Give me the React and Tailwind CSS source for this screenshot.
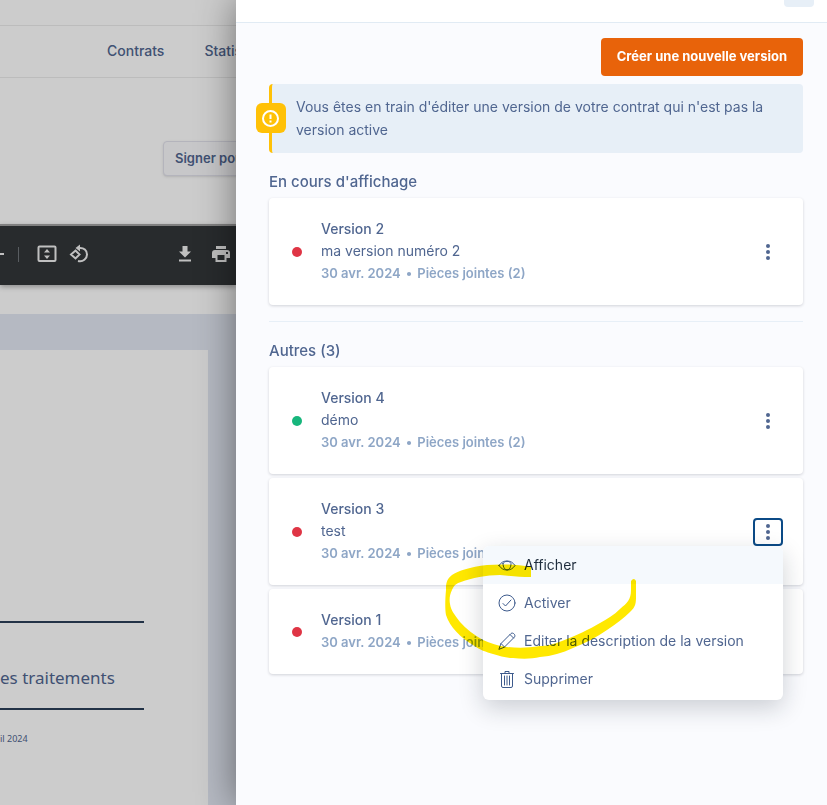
const font = "font-['Inter','Noto_Sans',sans-serif]";

function Kebab({ open, label }) {
  return (
    <button
      type="button"
      aria-label={label}
      aria-expanded={open}
      className={
        open
          ? 'flex h-7 w-[30px] items-center justify-center rounded border-2 border-[#0b4a86] bg-white'
          : 'flex h-7 w-[30px] items-center justify-center rounded'
      }
    >
      <svg width="4" height="16" viewBox="0 0 4 16" fill="#506690" className="shrink-0">
        <circle cx="2" cy="2" r="2" />
        <circle cx="2" cy="8" r="2" />
        <circle cx="2" cy="14" r="2" />
      </svg>
    </button>
  );
}

const stroke = {
  width: 18,
  height: 18,
  viewBox: '0 0 18 18',
  fill: 'none',
  stroke: 'currentColor',
  strokeLinecap: 'round',
  strokeLinejoin: 'round',
  className: 'shrink-0',
};

function EyeIcon() {
  return (
    <svg {...stroke}>
      <path d="M1 9.500C3 6.500 5.500 5 9 5s6 1.500 8 4.500c-2 3-4.500 4.500-8 4.500S3 12.500 1 9.500z" />
      <path d="M5 7.500c0 8.500 8 8.500 8 0C11.500 4.500 6.500 4.500 5 7.500z" />
    </svg>
  );
}

function CheckIcon() {
  return (
    <svg {...stroke}>
      <circle cx="9" cy="9" r="8" />
      <path d="M5 9.500l2.500 2.500L13 6" />
    </svg>
  );
}

function PencilIcon() {
  return (
    <svg {...stroke}>
      <path d="M1 17l2-5.500L13 1.500C15 0 18 3 16.500 5L6.500 15zM12 2.500L15.500 6M3 11.500L6.500 15" />
    </svg>
  );
}

function TrashIcon() {
  return (
    <svg {...stroke}>
      <path d="M2.500 3.500h13M7 3.500v-2h4v2M3.500 3.500V16q0 1.500 1.500 1.500h8q1.500 0 1.500-1.500V3.500M6.500 6v9M9 6v9M11.500 6v9" />
    </svg>
  );
}

const actions = [
  { label: 'Afficher', Icon: EyeIcon, active: true },
  { label: 'Activer', Icon: CheckIcon },
  { label: 'Editer la description de la version', Icon: PencilIcon },
  { label: 'Supprimer', Icon: TrashIcon },
];

function ActionMenu() {
  return (
    <div
      role="menu"
      className="absolute top-full right-0 z-10 w-[300px] overflow-hidden rounded-md bg-white pb-0.5 shadow-[0_8px_24px_rgba(22,28,45,0.2)]"
    >
      {actions.map(({ label, Icon, active }) => (
        <button
          key={label}
          type="button"
          role="menuitem"
          className={
            active
              ? 'flex h-[38px] w-full items-center gap-2 bg-[#f5f9fd] px-[15px] text-left text-[14px] text-[#1f2d3d]'
              : 'flex h-[38px] w-full items-center gap-2 px-[15px] text-left text-[14px] text-[#506690]'
          }
        >
          <span className="flex text-[#3d5a8c]">
            <Icon />
          </span>
          {label}
        </button>
      ))}
    </div>
  );
}

function VersionCard({ title, description, live, attachments = 2, open }) {
  return (
    <article className="flex items-center rounded bg-white py-5 pr-5 pl-[23px] shadow-[0_1px_3px_rgba(22,28,45,0.18)]">
      <span className={live ? 'size-[10px] rounded-full bg-[#17b67c]' : 'size-[10px] rounded-full bg-[#df3545]'} />
      <div className="ml-[19px] min-w-0 flex-1 text-[14px] text-[#506690]">
        <h3 className="leading-[22px] font-medium">{title}</h3>
        {description && <p className="leading-[22px]">{description}</p>}
        <p className="flex gap-[5px] text-[13px] leading-[23px] font-semibold text-[#8ea6c6]">
          <span>30 avr. 2024</span>
          <span>•</span>
          <span>Pièces jointes ({attachments})</span>
        </p>
      </div>
      <div className="relative">
        <Kebab open={open} label={`Actions ${title}`} />
        {open && <ActionMenu />}
      </div>
    </article>
  );
}

function PageBehind() {
  return (
    <div className="relative w-[236px] shrink-0 overflow-hidden bg-white whitespace-nowrap">
      <div className="h-[26px] border-b border-[#ebebeb]" />
      <nav className="flex h-[52px] items-center gap-10 border-b border-[#ebebeb] pb-0.5 pl-[107px] text-[14px] font-medium text-[#506690]">
        <a href="#contrats">Contrats</a>
        <a href="#statistiques">Statistiques</a>
      </nav>
      <div className="flex pt-[63px] pb-12 pl-[163px]">
        <button type="button" className="h-[35px] shrink-0 rounded border border-[#e1e1ec] bg-[#f9f9fc] px-[11px] text-[13px] font-semibold text-[#506690] shadow-sm">
          Signer pour
        </button>
      </div>
      <div className="flex h-[61px] items-center border-t-2 border-[#a0a0a0] bg-[#323639] pb-[3px] text-[#f1f1f1] shadow-[0_2px_5px_rgba(0,0,0,0.3)]">
        <span className="h-[2px] w-1 bg-[#f1f1f1]" />
        <span className="ml-[14px] h-[15px] w-px bg-[#70757a]" />
        <svg width="20" height="18" viewBox="0 0 20 18" className="ml-[18px] shrink-0" fill="currentColor">
          <rect x="1.500" y="1.500" width="17" height="14.500" rx="1" fill="none" stroke="currentColor" strokeWidth="2" />
          <path d="M10 4l3 3.500H7zM10 14l3-3.500H7z" />
        </svg>
        <svg width="20" height="20" viewBox="0 0 20 20" className="ml-3 shrink-0" fill="none" stroke="currentColor" strokeWidth="2">
          <path d="M6.500 6.500l4 4-4 4-4.500-4z" />
          <path d="M10 4c5-.5 8 2.500 8 6.500s-4 8-9 6.500" />
          <path d="M11 .5v7L6.500 4z" fill="currentColor" stroke="none" />
        </svg>
        <svg width="12" height="16" viewBox="0 0 12 16" className="ml-[90px] shrink-0" fill="currentColor">
          <path d="M3.500 0h5v5.500H12l-6 6-6-6h3.500zM0 13.500h12v2H0z" />
        </svg>
        <svg width="18" height="16" viewBox="0 0 18 16" className="ml-[21px] shrink-0" fill="currentColor">
          <path fillRule="evenodd" d="M4 0h10v3H4zM3 4h12q3 0 3 3v5h-3.500v4h-11v-4H0V7q0-3 3-3zM5.500 9v5h7V9zM14 6v2h2V6z" />
        </svg>
      </div>
      <div className="mt-[29px] bg-[#e3e8f3] pt-9 pr-7">
        <div className="h-[455px] bg-white">
          <div className="h-[271px]" />
          <div className="flex h-[89px] w-36 items-center border-y-2 border-[#2b3f58] pt-6 font-['Noto_Sans',sans-serif] text-[17px] text-[#506690]">
            <span className="h-[26px] leading-[26px]">es traitements</span>
          </div>
          <p className="pt-5 font-['Noto_Sans',sans-serif] text-[9px] leading-[18px] text-[#506690]">il 2024</p>
        </div>
      </div>
      <div className="absolute inset-0 bg-black/20" />
    </div>
  );
}

function HighlighterMark() {
  return (
    <svg
      width="191"
      height="96"
      viewBox="445 563 191 96"
      className="pointer-events-none absolute top-[563px] right-[191px] z-20 mix-blend-multiply"
      fill="#ffe800"
    >
      <path d="M531 567C515 564 500 564 487 565C470 567 458 571 452 575C446 580 446 584 446 590C445 600 445 610 446 615C450 627 460 637 473 645C480 650 486 652 493 654C500 656 506 658 513 658C522 659 532 659 540 657C552 656 562 653 573 648C586 643 597 637 607 630C616 624 624 618 630 612C636 607 636 602 636 596V581Q634 577 631 581V590C631 600 627 603 620 609C614 615 607 619 600 623C590 629 575 636 562 641C552 645 546 646 540 646C528 648 518 648 507 647C498 646 490 643 483 640C474 635 466 629 460 622C455 615 451 611 450 604C449 599 450 594 452 590C454 585 457 583 461 582C472 578 486 575 500 575C512 576 520 577 531 577Z" />
    </svg>
  );
}

function VersionsDrawer() {
  return (
    <aside className="relative z-10 flex min-w-0 flex-1 flex-col bg-[#fafbfe] shadow-[0_0_36px_rgba(0,0,0,0.45)]">
      <header className="flex h-[23px] items-start justify-end border-b border-[#e1ebf4] bg-white pr-[13px]">
        <button type="button" aria-label="Fermer" className="h-[7px] w-[30px] rounded-b bg-[#e7eff7]" />
      </header>
      <div className="pt-[15px] pr-6 pl-[33px]">
        <div className="flex justify-end">
          <button type="button" className="h-[38px] rounded bg-[#e8630a] px-4 text-[13px] font-bold whitespace-nowrap text-white">
            Créer une nouvelle version
          </button>
        </div>
        <div role="alert" className="mt-2 flex items-center rounded-sm border-l-[3px] border-[#ffc107] bg-[#e7eff7] pt-[11px] pb-3">
          <span className="-ml-4 flex size-[30px] shrink-0 items-center justify-center rounded-md bg-[#ffc107]">
            <svg width="18" height="18" viewBox="0 0 18 18" fill="none" stroke="white" strokeWidth="2">
              <circle cx="8.500" cy="9.500" r="7.500" />
              <path d="M8.500 5.500v4.500M8.500 11.500v2" />
            </svg>
          </span>
          <p className="ml-[10px] pr-9 text-[14px] leading-[23px] text-[#506690]">
            Vous êtes en train d'éditer une version de votre contrat qui n'est pas la version active
          </p>
        </div>
        <h2 className="mt-[17px] mb-1 text-[15px] leading-6 font-medium text-[#506690]">En cours d'affichage</h2>
        <VersionCard title="Version 2" description="ma version numéro 2" />
        <hr className="mt-4 border-[#e7eff7]" />
        <h2 className="mt-[17px] mb-1 text-[15px] leading-6 font-medium text-[#506690]">Autres (3)</h2>
        <div className="flex flex-col gap-1">
          <VersionCard title="Version 4" description="démo" live />
          <VersionCard title="Version 3" description="test" open />
          <VersionCard title="Version 1" />
        </div>
      </div>
      <HighlighterMark />
    </aside>
  );
}

export default function App() {
  return (
    <div className={`flex min-h-screen overflow-hidden ${font}`}>
      <PageBehind />
      <VersionsDrawer />
    </div>
  );
}
